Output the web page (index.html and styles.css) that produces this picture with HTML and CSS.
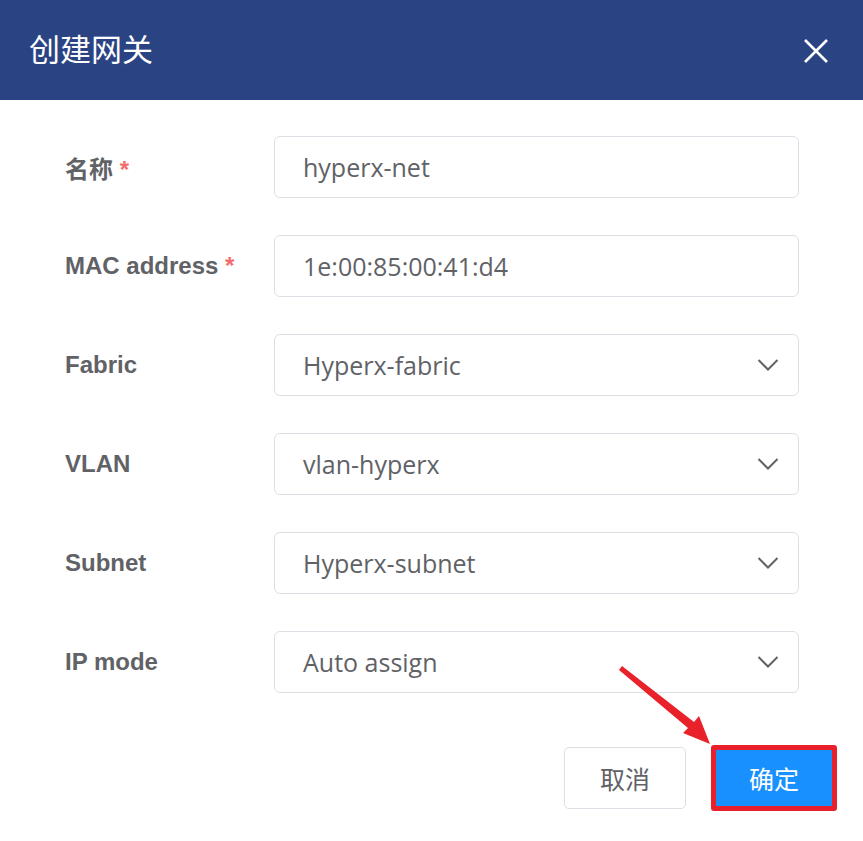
FILE: index.html
```html
<!DOCTYPE html>
<html lang="zh">
<head>
<meta charset="utf-8">
<title>创建网关</title>
<link rel="stylesheet" href="styles.css">
</head>
<body>
<div class="dialog">
  <header class="head">
    <h1 class="title">创建网关</h1>
    <svg class="close" width="26" height="26" viewBox="0 0 26 26"><path d="M2 2 L24 24 M24 2 L2 24" stroke="#fff" stroke-width="2.6" fill="none"/></svg>
  </header>
  <form class="form">
    <div class="row"><label class="lbl">名称 <span class="req">*</span></label><div class="field">hyperx-net</div></div>
    <div class="row"><label class="lbl">MAC address <span class="req">*</span></label><div class="field">1e:00:85:00:41:d4</div></div>
    <div class="row"><label class="lbl">Fabric</label><div class="field select">Hyperx-fabric<svg class="chev" width="22" height="14" viewBox="0 0 22 14"><path d="M1.5 2 L11 11.5 L20.5 2" stroke="#606266" stroke-width="2" fill="none"/></svg></div></div>
    <div class="row"><label class="lbl">VLAN</label><div class="field select">vlan-hyperx<svg class="chev" width="22" height="14" viewBox="0 0 22 14"><path d="M1.5 2 L11 11.5 L20.5 2" stroke="#606266" stroke-width="2" fill="none"/></svg></div></div>
    <div class="row"><label class="lbl">Subnet</label><div class="field select">Hyperx-subnet<svg class="chev" width="22" height="14" viewBox="0 0 22 14"><path d="M1.5 2 L11 11.5 L20.5 2" stroke="#606266" stroke-width="2" fill="none"/></svg></div></div>
    <div class="row"><label class="lbl">IP mode</label><div class="field select">Auto assign<svg class="chev" width="22" height="14" viewBox="0 0 22 14"><path d="M1.5 2 L11 11.5 L20.5 2" stroke="#606266" stroke-width="2" fill="none"/></svg></div></div>
  </form>
  <div class="foot">
    <button class="btn cancel" type="button">取消</button>
    <button class="btn ok" type="button">确定</button>
  </div>
  <svg class="arrow" width="863" height="841" viewBox="0 0 863 841">
    <polygon points="619,670 622,666 694,722 699,716 710,744 683,733 688,728" fill="#e8212b"/>
  </svg>
</div>
</body>
</html>
```
FILE: styles.css
```css
* { box-sizing: border-box; }
html, body { margin: 0; padding: 0; background: #fff; }
body { width: 863px; height: 841px; overflow: hidden; }
.dialog { position: relative; width: 863px; height: 841px; }
.head {
  height: 100px;
  background: #2a4483;
  display: flex;
  align-items: center;
  justify-content: space-between;
  padding: 0 34px 0 29px;
}
.title {
  margin: 0;
  color: #fff;
  font-family: "Noto Sans CJK SC", sans-serif;
  font-weight: 400;
  font-size: 31px;
  line-height: 1;
  padding-bottom: 6px;
}
.close { margin-top: 2px; }
.form {
  padding: 36px 64px 0 65px;
  display: flex;
  flex-direction: column;
  gap: 37px;
}
.row { display: flex; align-items: center; height: 62px; }
.lbl {
  width: 209px;
  flex: none;
  font-family: "Liberation Sans", "Noto Sans CJK SC", sans-serif;
  font-weight: 700;
  font-size: 24px;
  color: #606266;
}
.req { color: #f56c6c; font-weight: 700; }
.field {
  flex: 1;
  height: 62px;
  border: 1px solid #dcdfe6;
  border-radius: 6px;
  display: flex;
  align-items: center;
  justify-content: space-between;
  padding: 0 19px 0 28px;
  font-family: "Open Sans", "Noto Sans CJK SC", sans-serif;
  font-size: 25px;
  color: #606266;
}
.chev { flex: none; }
.foot {
  display: flex;
  justify-content: flex-end;
  align-items: center;
  gap: 25px;
  padding: 52px 26px 0 0;
}
.btn {
  font-family: "Noto Sans CJK SC", sans-serif;
  font-size: 25px;
  border-radius: 5px;
  padding: 0;
  margin: 0;
  cursor: pointer;
}
.cancel {
  width: 122px;
  height: 62px;
  background: #fff;
  border: 1px solid #dcdfe6;
  color: #606266;
}
.ok {
  width: 126px;
  height: 66px;
  background: #1890ff;
  border: 5px solid #e8202b;
  border-radius: 3px;
  color: #fff;
}
.arrow { position: absolute; left: 0; top: 0; pointer-events: none; }
```
